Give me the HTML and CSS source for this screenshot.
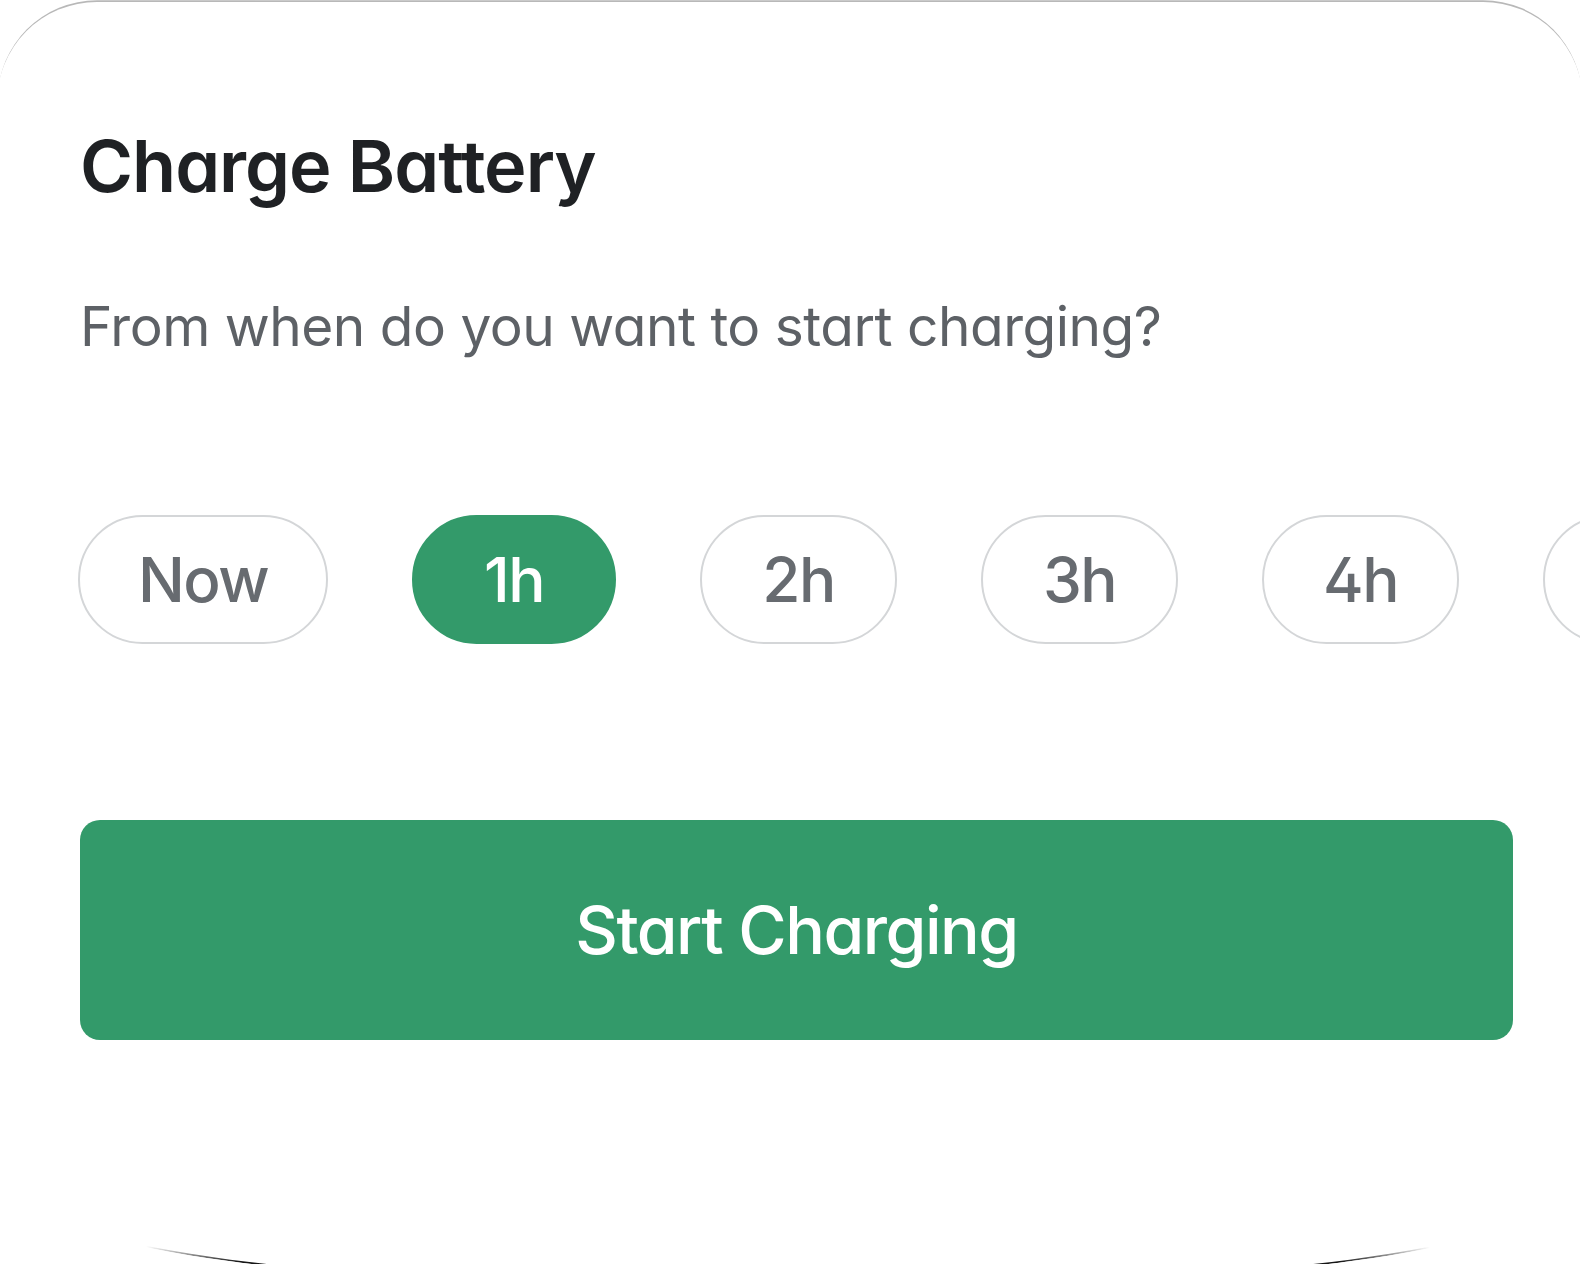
FILE: index.html
```html
<!DOCTYPE html>
<html lang="en">
<head>
<meta charset="utf-8">
<title>Charge Battery</title>
<link rel="stylesheet" href="styles.css">
</head>
<body>
<div class="card">
  <h1 class="title">Charge Battery</h1>
  <p class="subtitle">From when do you want to start charging?</p>
  <div class="pills">
    <button class="pill pill-now">Now</button>
    <button class="pill pill-active">1h</button>
    <button class="pill">2h</button>
    <button class="pill">3h</button>
    <button class="pill">4h</button>
    <button class="pill">5h</button>
  </div>
  <button class="cta">Start Charging</button>
</div>
</body>
</html>
```
FILE: styles.css
```css
html, body {
  margin: 0;
  padding: 0;
  background: #ffffff;
  overflow: hidden;
}
body {
  width: 1580px;
  height: 1264px;
  font-family: "Inter", "Noto Sans", sans-serif;
  font-feature-settings: "cv11", "cv02";
}
.card {
  position: relative;
  box-sizing: border-box;
  margin: 2px -3px 0 -3px;
  height: 1277px;
  border-radius: 100px 100px 525px 525px / 100px 100px 105px 105px;
  box-shadow: 0 -2.5px 0 -0.8px #b8b8b8;
  padding: 128px 0 0 83px;
  background: #ffffff;
}
.card::after {
  content: "";
  position: absolute;
  left: 0;
  right: 0;
  bottom: 0;
  height: 110px;
  border-bottom: 2px solid #161616;
  border-radius: 0 0 525px 525px / 0 0 105px 105px;
  pointer-events: none;
  -webkit-mask-image: linear-gradient(to right, transparent 149px, #000 243px, #000 calc(100% - 243px), transparent calc(100% - 153px));
  mask-image: linear-gradient(to right, transparent 149px, #000 243px, #000 calc(100% - 243px), transparent calc(100% - 153px));
}
.title {
  margin: 0;
  font-size: 72px;
  line-height: 72px;
  font-weight: 600;
  color: #1f2124;
  letter-spacing: -1px;
}
.subtitle {
  margin: 97px 0 0 0;
  font-size: 55px;
  line-height: 55px;
  font-weight: 400;
  color: #5d6166;
  letter-spacing: -0.5px;
}
.pills {
  display: flex;
  gap: 84px;
  margin-top: 161px;
  margin-left: -2px;
  overflow: hidden;
}
.pill {
  flex: none;
  box-sizing: border-box;
  width: 197px;
  height: 129px;
  padding: 0;
  border: 2px solid #d4d6d8;
  border-radius: 65px;
  background: #ffffff;
  font-family: inherit;
  font-feature-settings: "cv11", "cv02";
  font-size: 62px;
  font-weight: 500;
  color: #676b70;
  letter-spacing: -1.5px;
  text-align: center;
}
.pill-now {
  width: 250px;
}
.pill-active {
  width: 204px;
  background: #339a6a;
  border-color: #339a6a;
  color: #ffffff;
}
.cta {
  display: block;
  margin-top: 176px;
  margin-left: 0;
  width: 1433px;
  height: 220px;
  border: none;
  border-radius: 20px;
  background: #339a6a;
  color: #ffffff;
  font-family: inherit;
  font-feature-settings: "cv11", "cv02";
  font-size: 66px;
  font-weight: 500;
  letter-spacing: -1.5px;
}
```
